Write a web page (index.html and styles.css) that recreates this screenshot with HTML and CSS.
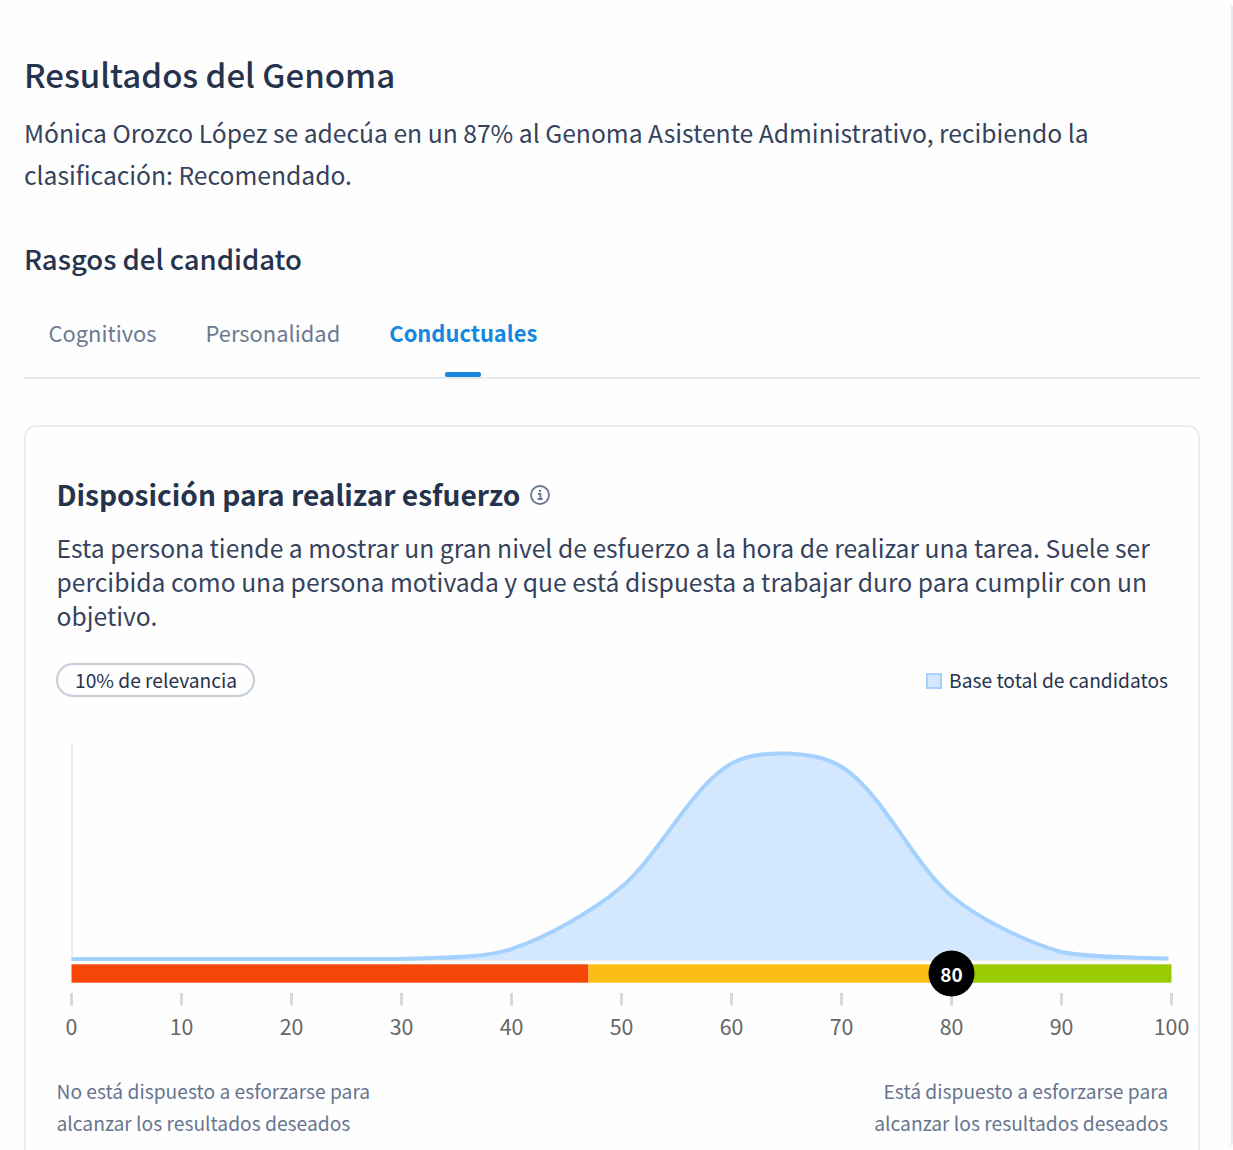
FILE: index.html
```html
<!DOCTYPE html>
<html lang="es">
<head>
  <meta charset="UTF-8">
  <meta name="viewport" content="width=device-width, initial-scale=1.0">
  <title>Resultados del Genoma</title>
  <link rel="stylesheet" href="styles.css">
</head>
<body>
  <main class="panel">
    <h1 class="title"><span>Resultados del Genoma</span></h1>
    <p class="summary"><span>Mónica Orozco López se adecúa en un 87% al Genoma Asistente Administrativo, recibiendo la</span><br><span>clasificación: Recomendado.</span></p>

    <h2 class="subtitle"><span>Rasgos del candidato</span></h2>
    <nav class="tabs">
      <a class="tab"><span>Cognitivos</span></a>
      <a class="tab"><span>Personalidad</span></a>
      <a class="tab active"><span>Conductuales</span></a>
    </nav>

    <section class="card">
      <h3 class="card-title">
        <span>Disposición para realizar esfuerzo</span>
        <svg class="info" viewBox="0 0 20 20" width="20" height="20">
          <circle cx="10" cy="10" r="9" />
          <path d="M8 9h2.4v4.8M7.6 14h5" />
          <path d="M9 6h2" />
        </svg>
      </h3>
      <p class="description"><span>Esta persona tiende a mostrar un gran nivel de esfuerzo a la hora de realizar una tarea. Suele ser</span><br><span>percibida como una persona motivada y que está dispuesta a trabajar duro para cumplir con un</span><br><span>objetivo.</span></p>

      <div class="meta">
        <span class="badge">10% de relevancia</span>
        <div class="legend"><i class="swatch"></i><span>Base total de candidatos</span></div>
      </div>

      <svg class="chart" viewBox="-14.5 0 1135 300" width="1135" height="300">
        <path class="axis" d="M.5 0V216H1097" />
        <path class="area" d="M0 215H330C363 213.5 409.2 215 440 205C475.2 193.5 521.4 167.1 550 143C587.4 111.5 620.4 41.5 660 19.500C686.4 5 744 6.500 770 22.800C810 47.3 841.8 120 880 152C907.8 175.4 955 198 990 208C1020.4 214 1060 213 1097 214.5V216H0Z" />
        <path class="curve" d="M0 215H330C363 213.5 409.2 215 440 205C475.2 193.5 521.4 167.1 550 143C587.4 111.5 620.4 41.5 660 19.500C686.4 5 744 6.500 770 22.800C810 47.3 841.8 120 880 152C907.8 175.4 955 198 990 208C1020.4 214 1060 213 1097 214.5" />
        <rect class="low" x="0" y="220.3" width="517" height="18.4" />
        <rect class="mid" x="517" y="220.3" width="363" height="18.4" />
        <rect class="high" x="880" y="220.3" width="220" height="18.4" />
        <path class="ticks" d="M0 249v12.500M110 249v12.500M220 249v12.500M330 249v12.500M440 249v12.500M550 249v12.500M660 249v12.500M770 249v12.500M880 249v12.500M990 249v12.500M1100 249v12.500" />
        <g class="labels">
          <text x="0" y="291">0</text>
          <text x="110" y="291">10</text>
          <text x="220" y="291">20</text>
          <text x="330" y="291">30</text>
          <text x="440" y="291">40</text>
          <text x="550" y="291">50</text>
          <text x="660" y="291">60</text>
          <text x="770" y="291">70</text>
          <text x="880" y="291">80</text>
          <text x="990" y="291">90</text>
          <text x="1100" y="291">100</text>
        </g>
        <circle cx="880" cy="229.500" r="23" />
        <text class="score" x="880" y="238">80</text>
      </svg>

      <div class="extremes">
        <p><span>No está dispuesto a esforzarse para</span><br><span>alcanzar los resultados deseados</span></p>
        <p class="right"><span>Está dispuesto a esforzarse para</span><br><span>alcanzar los resultados deseados</span></p>
      </div>
    </section>
  </main>
</body>
</html>
```
FILE: styles.css
```css
* {
  box-sizing: border-box;
}
body {
  margin: 0;
  height: 1150px;
  overflow: hidden;
  background-color: #fefefe;
  color: #26334d;
  font-family: "Noto Sans CJK SC", "Noto Sans", sans-serif;
}
h1, h2, h3, p {
  margin: 0;
  white-space: nowrap;
}
.panel {
  height: 1142px;
  margin-top: 4px;
  padding: 48px 31px 0 24px;
  border-right: 2px solid #e6ebf0;
  border-radius: 0 4px 4px 0;
}
.title {
  font-size: 33px;
  line-height: 44px;
  font-weight: 500;
}
.summary {
  margin-top: 15px;
  font-size: 24.66px;
  line-height: 42px;
  color: #36435c;
}
.subtitle {
  margin-top: 46px;
  font-size: 27.5px;
  line-height: 34px;
  font-weight: 500;
}
.tabs {
  display: flex;
  gap: 49px;
  height: 104px;
  padding: 41px 25px 0 24.5px;
  border-bottom: 2px solid #e6ebf0;
}
.tab {
  display: flex;
  flex-direction: column;
  align-items: center;
  justify-content: space-between;
  font-size: 21.9px;
  line-height: 34px;
  color: #6b7a90;
}
.tab.active {
  color: #1487e0;
  font-weight: 700;
}
.tab.active::after {
  content: "";
  width: 36px;
  height: 5px;
  border-radius: 2px;
  background-color: #1487e0;
}
.card {
  height: 760px;
  margin-top: 46px;
  padding: 49px 30px 0 30.5px;
  border: 2px solid #e9edf1;
  border-radius: 12px;
}
.card-title {
  display: flex;
  align-items: center;
  gap: 9.5px;
  font-size: 28.1px;
  line-height: 36px;
  font-weight: 700;
}
.info {
  margin-top: 2px;
  fill: none;
  stroke: #66758a;
  stroke-width: 1.8;
}
.description {
  margin-top: 18px;
  font-size: 24.68px;
  line-height: 34px;
  color: #36435c;
}
.meta {
  display: flex;
  justify-content: space-between;
  align-items: center;
  margin-top: 31px;
  font-size: 19.2px;
}
.badge {
  height: 34px;
  margin-left: -0.5px;
  padding: 0 16px 0 17px;
  border: 2px solid #c5cedb;
  border-radius: 17px;
  line-height: 30px;
}
.legend {
  display: flex;
  align-items: center;
  gap: 7px;
  line-height: 30px;
}
.swatch {
  width: 16px;
  height: 16px;
  margin-top: 2px;
  border: 2px solid #a5d1ff;
  background-color: #d3e8ff;
}
.chart {
  display: block;
  margin-top: 47px;
  overflow: visible;
}
.axis {
  fill: none;
  stroke: #e6e6e6;
  stroke-width: 1.5;
}
.area {
  fill: #d3e8ff;
}
.curve {
  fill: none;
  stroke: #a5d1ff;
  stroke-width: 4;
}
.low {
  fill: #f64708;
}
.mid {
  fill: #fcbe14;
}
.high {
  fill: #9acb00;
}
.ticks {
  stroke: #d8d8d8;
  stroke-width: 3;
}
.labels {
  font-size: 21.4px;
  fill: #666;
  text-anchor: middle;
}
.score {
  font-size: 19px;
  font-weight: 700;
  fill: #fff;
  text-anchor: middle;
}
.extremes {
  display: flex;
  justify-content: space-between;
  margin-top: 31px;
  font-size: 19.23px;
  line-height: 32px;
  color: #66758f;
}
.right {
  text-align: right;
}
```
